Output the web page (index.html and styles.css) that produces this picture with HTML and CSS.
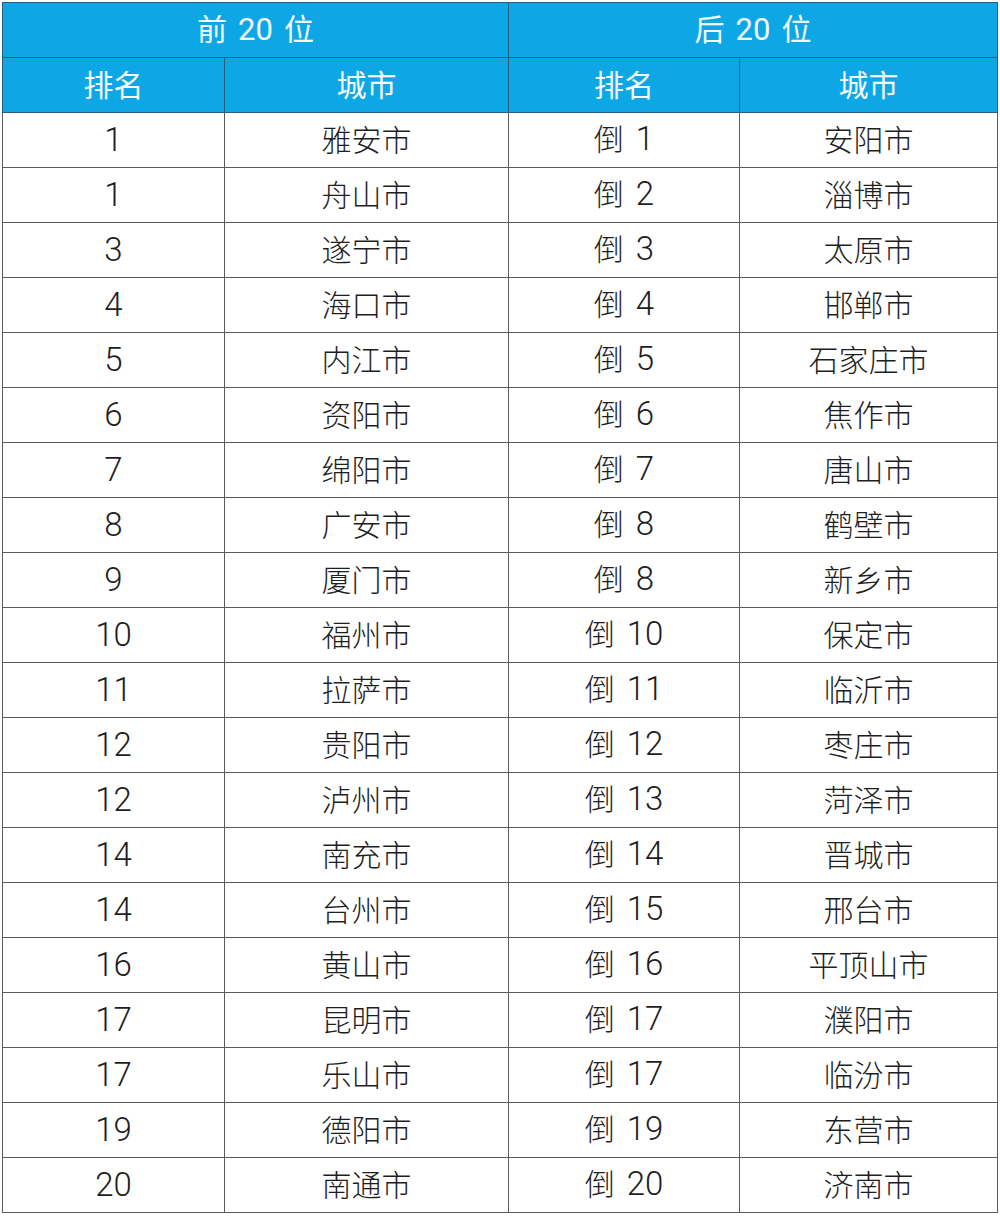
FILE: index.html
```html
<!DOCTYPE html>
<html lang="zh">
<head>
<meta charset="utf-8">
<link rel="stylesheet" href="styles.css">
</head>
<body>
<div class="wrap">
<table class="rank">
<colgroup><col class="c1"><col class="c2"><col class="c3"><col class="c4"></colgroup>
<thead>
<tr class="h1"><th colspan="2">前<span class="n s">20</span><span class="s">位</span></th><th colspan="2">后<span class="n s">20</span><span class="s">位</span></th></tr>
<tr class="h2"><th>排名</th><th>城市</th><th>排名</th><th>城市</th></tr>
</thead>
<tbody>
<tr><td class="n">1</td><td>雅安市</td><td>倒<span class="n s">1</span></td><td>安阳市</td></tr>
<tr><td class="n">1</td><td>舟山市</td><td>倒<span class="n s">2</span></td><td>淄博市</td></tr>
<tr><td class="n">3</td><td>遂宁市</td><td>倒<span class="n s">3</span></td><td>太原市</td></tr>
<tr><td class="n">4</td><td>海口市</td><td>倒<span class="n s">4</span></td><td>邯郸市</td></tr>
<tr><td class="n">5</td><td>内江市</td><td>倒<span class="n s">5</span></td><td>石家庄市</td></tr>
<tr><td class="n">6</td><td>资阳市</td><td>倒<span class="n s">6</span></td><td>焦作市</td></tr>
<tr><td class="n">7</td><td>绵阳市</td><td>倒<span class="n s">7</span></td><td>唐山市</td></tr>
<tr><td class="n">8</td><td>广安市</td><td>倒<span class="n s">8</span></td><td>鹤壁市</td></tr>
<tr><td class="n">9</td><td>厦门市</td><td>倒<span class="n s">8</span></td><td>新乡市</td></tr>
<tr><td class="n">10</td><td>福州市</td><td>倒<span class="n s">10</span></td><td>保定市</td></tr>
<tr><td class="n">11</td><td>拉萨市</td><td>倒<span class="n s">11</span></td><td>临沂市</td></tr>
<tr><td class="n">12</td><td>贵阳市</td><td>倒<span class="n s">12</span></td><td>枣庄市</td></tr>
<tr><td class="n">12</td><td>泸州市</td><td>倒<span class="n s">13</span></td><td>菏泽市</td></tr>
<tr><td class="n">14</td><td>南充市</td><td>倒<span class="n s">14</span></td><td>晋城市</td></tr>
<tr><td class="n">14</td><td>台州市</td><td>倒<span class="n s">15</span></td><td>邢台市</td></tr>
<tr><td class="n">16</td><td>黄山市</td><td>倒<span class="n s">16</span></td><td>平顶山市</td></tr>
<tr><td class="n">17</td><td>昆明市</td><td>倒<span class="n s">17</span></td><td>濮阳市</td></tr>
<tr><td class="n">17</td><td>乐山市</td><td>倒<span class="n s">17</span></td><td>临汾市</td></tr>
<tr><td class="n">19</td><td>德阳市</td><td>倒<span class="n s">19</span></td><td>东营市</td></tr>
<tr><td class="n">20</td><td>南通市</td><td>倒<span class="n s">20</span></td><td>济南市</td></tr>
</tbody>
</table>
</div>
</body>
</html>
```
FILE: styles.css
```css
html, body {
  margin: 0;
  padding: 0;
  background: #ffffff;
}
.wrap {
  padding: 2px 0 0 2px;
}
.rank {
  border-collapse: collapse;
  table-layout: fixed;
  width: 995px;
  font-family: "Noto Sans CJK SC", sans-serif;
  font-size: 30px;
  font-weight: 300;
  color: #1e1e1e;
}
.c1 { width: 222px; }
.c2 { width: 284px; }
.c3 { width: 231px; }
.c4 { width: 258px; }
.rank th, .rank td {
  height: 50px;
  padding: 0 0 4px 0;
  text-align: center;
  vertical-align: middle;
  line-height: 1;
}
.rank td {
  border: 1px solid #5a5a5a;
}
.rank td.n {
  padding-bottom: 2px;
}
.rank th {
  background: #0ea7e6;
  color: #f4fbff;
  font-weight: 400;
  border: 1px solid #25607d;
}
.n {
  font-family: "Roboto", "Liberation Sans", sans-serif;
  font-size: 33px;
  font-weight: 300;
}
.s {
  margin-left: 12px;
}
.rank th .s {
  margin-left: 11px;
}
.rank th .n {
  font-weight: 400;
  font-size: 31px;
}
```
